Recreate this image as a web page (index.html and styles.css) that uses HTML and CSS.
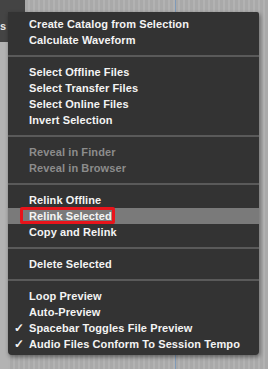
FILE: index.html
```html
<!DOCTYPE html>
<html lang="en">
<head>
    <meta charset="UTF-8">
    <title>Workspace Menu</title>
    <link rel="stylesheet" href="styles.css">
</head>
<body>
    <div class="backdrop">
        <div class="tab">s</div>
        <div class="guide"></div>
    </div>

    <div class="menu">
        <div class="item">Create Catalog from Selection</div>
        <div class="item">Calculate Waveform</div>
        <div class="sep"></div>
        <div class="item">Select Offline Files</div>
        <div class="item">Select Transfer Files</div>
        <div class="item">Select Online Files</div>
        <div class="item">Invert Selection</div>
        <div class="sep"></div>
        <div class="item disabled">Reveal in Finder</div>
        <div class="item disabled">Reveal in Browser</div>
        <div class="sep"></div>
        <div class="item">Relink Offline</div>
        <div class="item active marked">Relink Selected</div>
        <div class="item">Copy and Relink</div>
        <div class="sep"></div>
        <div class="item">Delete Selected</div>
        <div class="sep"></div>
        <div class="item">Loop Preview</div>
        <div class="item">Auto-Preview</div>
        <div class="item checked">Spacebar Toggles File Preview</div>
        <div class="item checked">Audio Files Conform To Session Tempo</div>
    </div>
</body>
</html>
```

FILE: styles.css
```css
body {
    margin: 0;
    width: 268px;
    height: 369px;
    overflow: hidden;
    position: relative;
    font-family: "Liberation Sans", Arial, sans-serif;
}
.backdrop {
    height: 369px;
    background:
        linear-gradient(to right, #b3b3b3 0, #b3b3b3 8px, transparent 8px),
        repeating-linear-gradient(to right, #a9a9a9 0, #a9a9a9 3px, #b2b2b2 3px, #b2b2b2 5px);
    position: relative;
}
.tab {
    width: 25px;
    height: 42px;
    background: #444444;
    color: #e8e8e8;
    font-size: 11px;
    font-weight: bold;
    line-height: 14px;
    padding-top: 19px;
    box-sizing: border-box;
}
.guide {
    position: absolute;
    left: 175px;
    top: 0;
    bottom: 0;
    width: 1px;
    background: #7f9ab8;
}
.menu {
    position: absolute;
    left: 8px;
    top: 12px;
    width: 251px;
    padding: 4px 0 3px;
    background: #333333;
    border-radius: 0 2px 4px 4px;
    box-shadow: 1px 2px 4px rgba(0, 0, 0, 0.45);
}
.item {
    height: 16px;
    line-height: 16px;
    padding-left: 21px;
    color: #f4f4f4;
    font-size: 11px;
    letter-spacing: 0.1px;
    font-weight: bold;
    white-space: nowrap;
    position: relative;
}
.item.disabled {
    color: #8c8c8c;
}
.item.active {
    background: #7a7a7a;
}
.item.checked::before {
    content: "\2713";
    position: absolute;
    left: 6px;
    font-size: 12px;
}
/* red callout drawn on the screenshot */
.item.marked::after {
    content: "";
    position: absolute;
    left: 12px;
    top: -1px;
    width: 95px;
    height: 17px;
    box-sizing: border-box;
    border: 3px solid #e8141b;
    border-radius: 2px;
}
.sep {
    height: 16px;
    background: linear-gradient(#5a5a5a, #5a5a5a) 0 7px / 100% 2px no-repeat;
}
```
